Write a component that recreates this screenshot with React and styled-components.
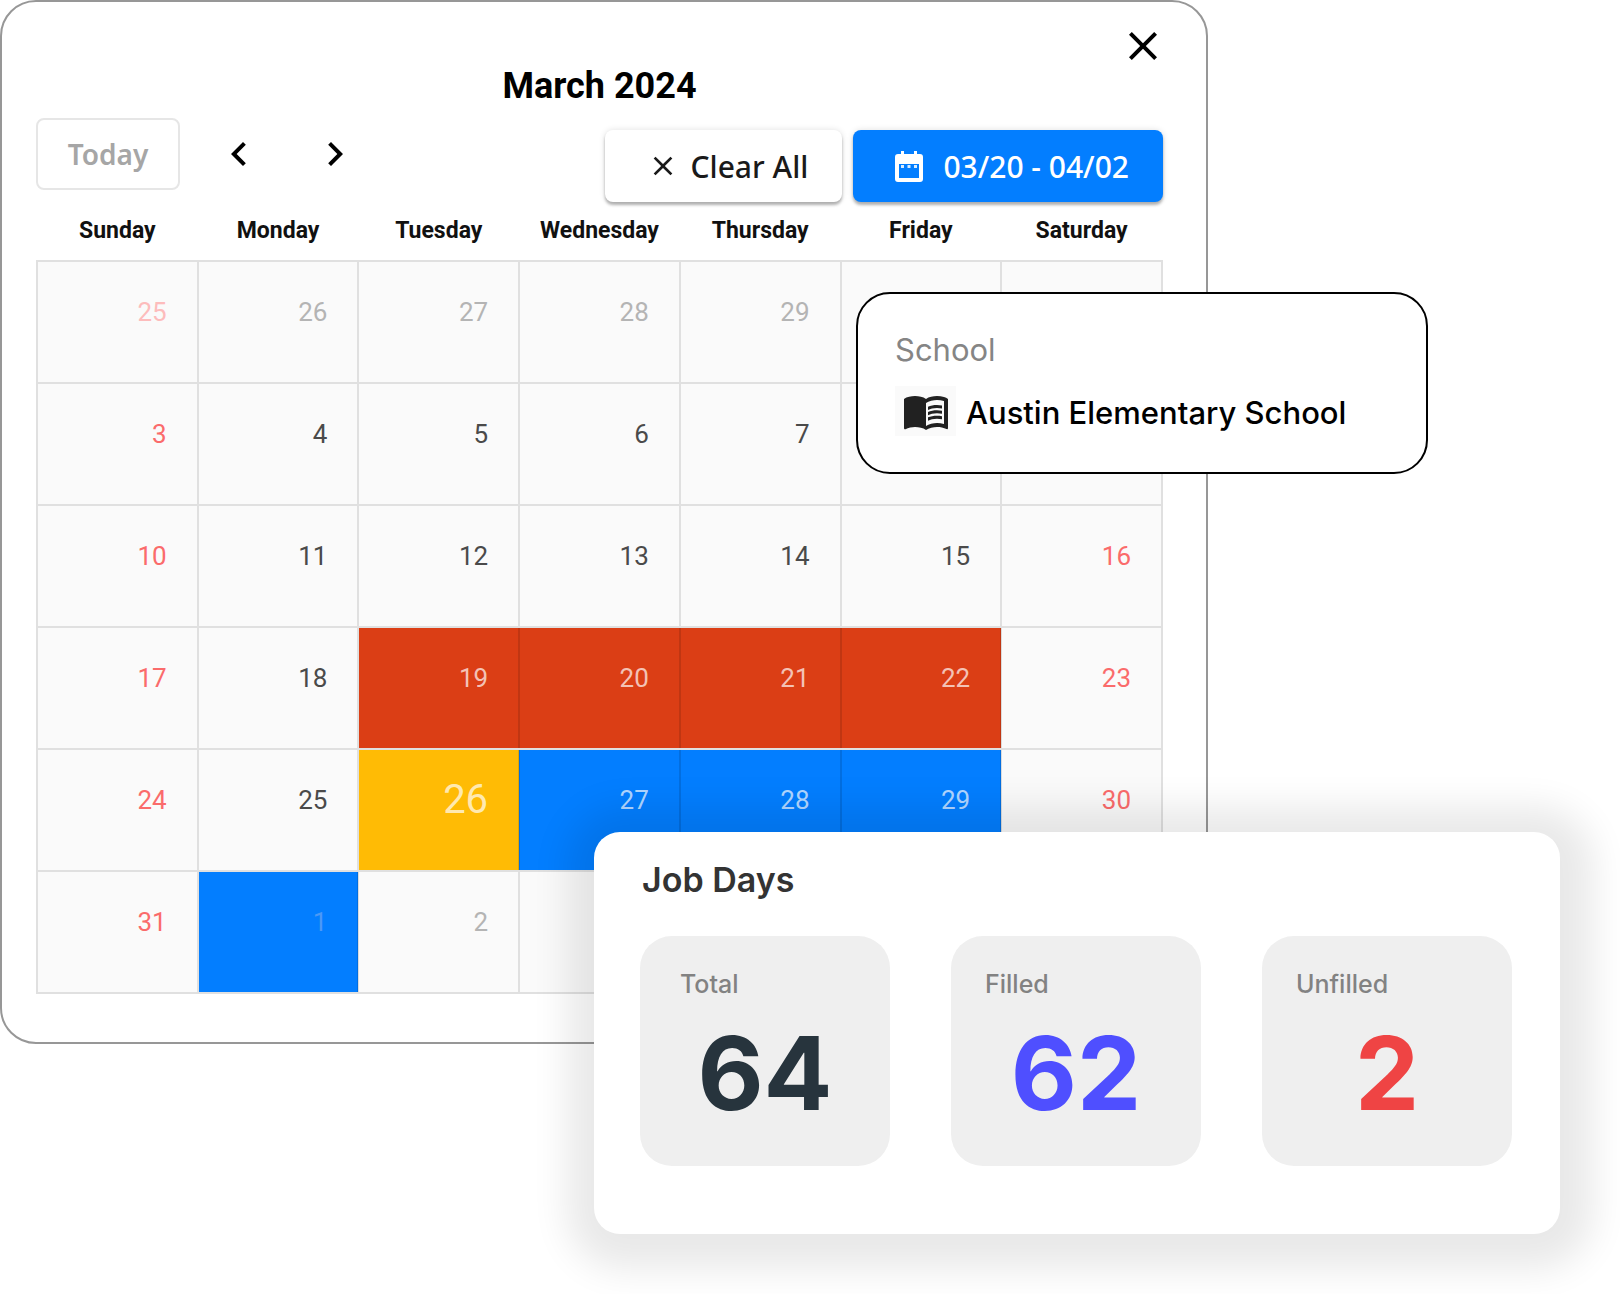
import React from 'react'
import styled, { createGlobalStyle } from 'styled-components'
import { MdChevronLeft, MdChevronRight, MdClose, MdMenuBook } from 'react-icons/md'

const weekdays = ['Sunday', 'Monday', 'Tuesday', 'Wednesday', 'Thursday', 'Friday', 'Saturday']

// null: the day lies under one of the floating cards
const weeks = [
  [25, 26, 27, 28, 29, null, null],
  [3, 4, 5, 6, 7, null, null],
  [10, 11, 12, 13, 14, 15, 16],
  [17, 18, 19, 20, 21, 22, 23],
  [24, 25, 26, 27, 28, 29, 30],
  [31, 1, 2, null, null, null, null],
]

const stats = [
  { label: 'Total', value: 64, color: '#27343d', inset: 40 },
  { label: 'Filled', value: 62, color: '#4f4fff', inset: 34 },
  { label: 'Unfilled', value: 2, color: '#ef4444', inset: 34 },
]

const fills = {
  booked: '#db3e15',
  today: '#ffbb05',
  selected: '#037eff',
}

const getStatus = (week, day) => {
  if (week === 3 && day > 1 && day < 6) return 'booked'
  if (week === 4 && day === 2) return 'today'
  if (week === 4 && day > 2 && day < 6) return 'selected'
  if (week === 5 && day === 1) return 'selected'
  return ''
}

// days of february and april
const isOutside = (week, day) => (week === 0 && day < 5) || (week === 5 && day > 0)

const getColor = (week, day) => {
  const status = getStatus(week, day)
  const outside = isOutside(week, day)
  if (status) return outside ? '#4c98f5' : 'rgba(255, 255, 255, 0.7)'
  if (day === 0 || day === 6) return outside ? '#fdbcbc' : '#fa6b6b'
  return outside ? '#b4b4b4' : '#4a4a4a'
}

const CalendarIcon = () => (
  <svg width="28" height="32" viewBox="0 0 28 32" fill="currentColor" aria-hidden="true">
    <path
      fillRule="evenodd"
      d="M6 1h3v3h10V1h3v3h3a3 3 0 0 1 3 3v22a3 3 0 0 1-3 3H3a3 3 0 0 1-3-3V7a3 3 0 0 1 3-3h3zM4 14v14h20V14z"
    />
    <path d="M6 15h3v3H6zM12.500 15h3v3h-3zM19 15h3v3h-3z" opacity="0.85" />
  </svg>
)

const App = () => {
  return (
    <>
      <GlobalStyle />
      <Page>
        <Calendar>
          <CloseButton type="button" aria-label="Close">
            <MdClose size={48} />
          </CloseButton>
          <Title>March 2024</Title>
          <Toolbar>
            <Navigation>
              <TodayButton type="button">Today</TodayButton>
              <ArrowButton type="button" aria-label="Previous month">
                <MdChevronLeft size={48} />
              </ArrowButton>
              <ArrowButton type="button" aria-label="Next month">
                <MdChevronRight size={48} />
              </ArrowButton>
            </Navigation>
            <Actions>
              <ActionButton type="button">
                <MdClose size={32} />
                Clear All
              </ActionButton>
              <ActionButton type="button" $primary>
                <CalendarIcon />
                03/20 - 04/02
              </ActionButton>
            </Actions>
          </Toolbar>
          <Month>
            <thead>
              <tr>
                {weekdays.map(name => (
                  <Weekday key={name} scope="col">
                    {name}
                  </Weekday>
                ))}
              </tr>
            </thead>
            <tbody>
              {weeks.map((days, week) => (
                <tr key={week}>
                  {days.map((date, day) => (
                    <Day key={day} $status={getStatus(week, day)} $color={getColor(week, day)}>
                      {date}
                    </Day>
                  ))}
                </tr>
              ))}
            </tbody>
          </Month>
        </Calendar>

        <SchoolCard>
          <SchoolLabel>School</SchoolLabel>
          <SchoolRow>
            <SchoolIcon>
              <MdMenuBook size={48} />
            </SchoolIcon>
            <SchoolName>Austin Elementary School</SchoolName>
          </SchoolRow>
        </SchoolCard>

        <JobCard>
          <JobTitle>Job Days</JobTitle>
          <StatList>
            {stats.map(({ label, value, color, inset }) => (
              <Stat key={label}>
                <StatLabel $inset={inset}>{label}</StatLabel>
                <StatValue $color={color}>{value}</StatValue>
              </Stat>
            ))}
          </StatList>
        </JobCard>
      </Page>
    </>
  )
}

const GlobalStyle = createGlobalStyle`
  * {
    box-sizing: border-box;
  }
  body {
    margin: 0;
    background: #fff;
    font-family: Roboto, 'Liberation Sans', sans-serif;
  }
  button {
    font-family: 'Noto Sans', 'Liberation Sans', sans-serif;
    cursor: pointer;
  }
`

const Page = styled.main`
  position: relative;
  display: flow-root;
  min-width: 1280px;
`

const Calendar = styled.section`
  display: flex;
  flex-direction: column;
  margin-right: 412px;
  padding: 20px 43px 48px 34px;
  border: 2px solid #979797;
  border-radius: 36px;
  background: #fff;
`

const CloseButton = styled.button`
  align-self: flex-end;
  display: flex;
  height: 40px;
  margin-right: -4px;
  padding: 0;
  border: none;
  background: none;
  color: #000;
`

const Title = styled.h1`
  margin: 0;
  font-size: 36px;
  line-height: 48px;
  font-weight: 700;
  text-align: center;
  color: #000;
`

const Toolbar = styled.div`
  display: flex;
  justify-content: space-between;
  align-items: flex-start;
  padding-top: 8px;
`

const Navigation = styled.div`
  display: flex;
  align-items: center;
`

const Actions = styled.div`
  display: flex;
  gap: 11px;
  padding-top: 12px;
`

const TodayButton = styled.button`
  height: 72px;
  width: 144px;
  margin-right: 11px;
  border: 2px solid #e6e6e6;
  border-radius: 8px;
  background: #fff;
  color: #a6a6a6;
  font-size: 28px;
  font-weight: 600;
`

const ArrowButton = styled.button`
  display: grid;
  place-items: center;
  width: 96px;
  height: 72px;
  padding: 0;
  border: none;
  background: none;
  color: #000;
`

const ActionButton = styled.button`
  display: flex;
  align-items: center;
  gap: ${({ $primary }) => ($primary ? '20px' : '12px')};
  height: 72px;
  padding: 0 34px 0 42px;
  border: none;
  border-radius: 8px;
  background: ${({ $primary }) => ($primary ? '#037eff' : '#fff')};
  color: ${({ $primary }) => ($primary ? '#fff' : '#1a1a1a')};
  font-size: 30px;
  font-weight: 500;
  box-shadow: 0 3px 3px rgba(0, 0, 0, 0.28), 0 0 6px rgba(0, 0, 0, 0.12);
`

const Month = styled.table`
  width: 100%;
  table-layout: fixed;
  border-collapse: collapse;
`

const Weekday = styled.th`
  height: 59px;
  padding: 0;
  font-size: 23px;
  line-height: 28px;
  font-weight: 700;
  color: #111;
`

const Day = styled.td`
  height: 122px;
  padding: 33px 30px 0 0;
  border: 2px solid #e0e0e0;
  border-right-color: ${({ $status }) => ($status ? 'rgba(0, 0, 0, 0.12)' : '#e0e0e0')};
  background: ${({ $status }) => fills[$status] || '#fafafa'};
  color: ${({ $color }) => $color};
  font-size: ${({ $status }) => ($status === 'today' ? '40px' : '26px')};
  line-height: 34px;
  text-align: right;
  vertical-align: top;
`

const SchoolCard = styled.section`
  position: absolute;
  top: 292px;
  right: 192px;
  width: 572px;
  padding: 38px 37px 36px;
  border: 2px solid #000;
  border-radius: 34px;
  background: #fff;
  font-family: Inter, 'Liberation Sans', sans-serif;
  font-size: 31px;
`

const SchoolLabel = styled.div`
  line-height: 36px;
  color: #858585;
`

const SchoolRow = styled.div`
  display: flex;
  align-items: flex-end;
  gap: 10px;
  margin-top: 18px;
`

const SchoolIcon = styled.span`
  display: grid;
  place-items: center;
  width: 61px;
  height: 50px;
  background: #fafafa;
  color: #212121;
`

const SchoolName = styled.span`
  line-height: 46px;
  font-weight: 500;
  color: #000;
`

const JobCard = styled.section`
  position: relative;
  width: 966px;
  margin: -212px 60px 60px auto;
  padding: 26px 48px 68px 46px;
  border-radius: 26px;
  background: #fff;
  font-family: Inter, 'Liberation Sans', sans-serif;
  box-shadow: 3px 5px 36px 30px rgba(0, 0, 0, 0.09);
`

const JobTitle = styled.h2`
  margin: 0 0 34px 2px;
  font-size: 34px;
  line-height: 44px;
  font-weight: 600;
  color: #333;
`

const StatList = styled.div`
  display: flex;
  justify-content: space-between;
`

const Stat = styled.div`
  width: 250px;
  height: 230px;
  padding: 32px 0;
  border-radius: 32px;
  background: #efefef;
`

const StatLabel = styled.div`
  padding-left: ${({ $inset }) => $inset}px;
  font-size: 25px;
  line-height: 32px;
  font-weight: 500;
  color: #828282;
`

const StatValue = styled.div`
  margin-top: 8px;
  font-size: 102px;
  line-height: 130px;
  font-weight: 700;
  text-align: center;
  color: ${({ $color }) => $color};
`

export default App
